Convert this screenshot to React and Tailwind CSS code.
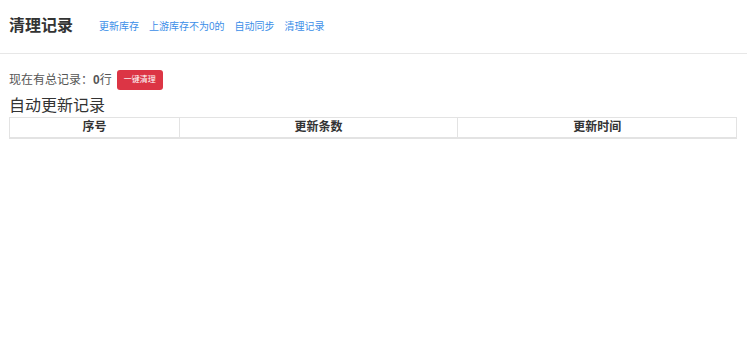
const links = ["更新库存", "上游库存不为0的", "自动同步", "清理记录"];

function App() {
    return (
        <div className="w-[750px] min-h-[339px] bg-white text-[#333]" style={{ fontFamily: '"Liberation Sans", "Noto Sans CJK SC", sans-serif' }}>
            <div className="w-[747px] h-[54px] border-b border-[#e7e7e7] flex items-center pl-[9px]">
                <h1 className="text-[16px] font-bold leading-none text-[#333] pb-[2px]">清理记录</h1>
                <div className="flex items-center gap-[10px] ml-[26px] pt-[1px]">
                    {links.map((link) => (
                        <a key={link} className="text-[10px] text-[#3b8ee8] leading-none">{link}</a>
                    ))}
                </div>
            </div>

            <div className="px-[9px] pt-[16px]">
                <div className="flex items-center h-[20px]">
                    <span className="text-[12px] text-[#555] leading-none">现在有总记录：<b className="font-bold">0</b>行</span>
                    <button className="ml-[5px] h-[20px] w-[46px] rounded-[3px] bg-[#dc3545] text-white text-[8px] leading-none">
                        一键清理
                    </button>
                </div>
                <h2 className="text-[16px] leading-none mt-[8px] text-[#333]">自动更新记录</h2>
                <table className="mt-[3px] w-[728px] border-collapse border border-[#e3e3e3] text-[12px]">
                    <thead>
                        <tr className="h-[20px] border-b-2 border-[#e3e3e3]">
                            <th className="w-[170px] border-r border-[#e3e3e3] font-bold leading-none">序号</th>
                            <th className="w-[279px] border-r border-[#e3e3e3] font-bold leading-none">更新条数</th>
                            <th className="w-[279px] font-bold leading-none">更新时间</th>
                        </tr>
                    </thead>
                    <tbody></tbody>
                </table>
            </div>
        </div>
    );
}
export default App;
